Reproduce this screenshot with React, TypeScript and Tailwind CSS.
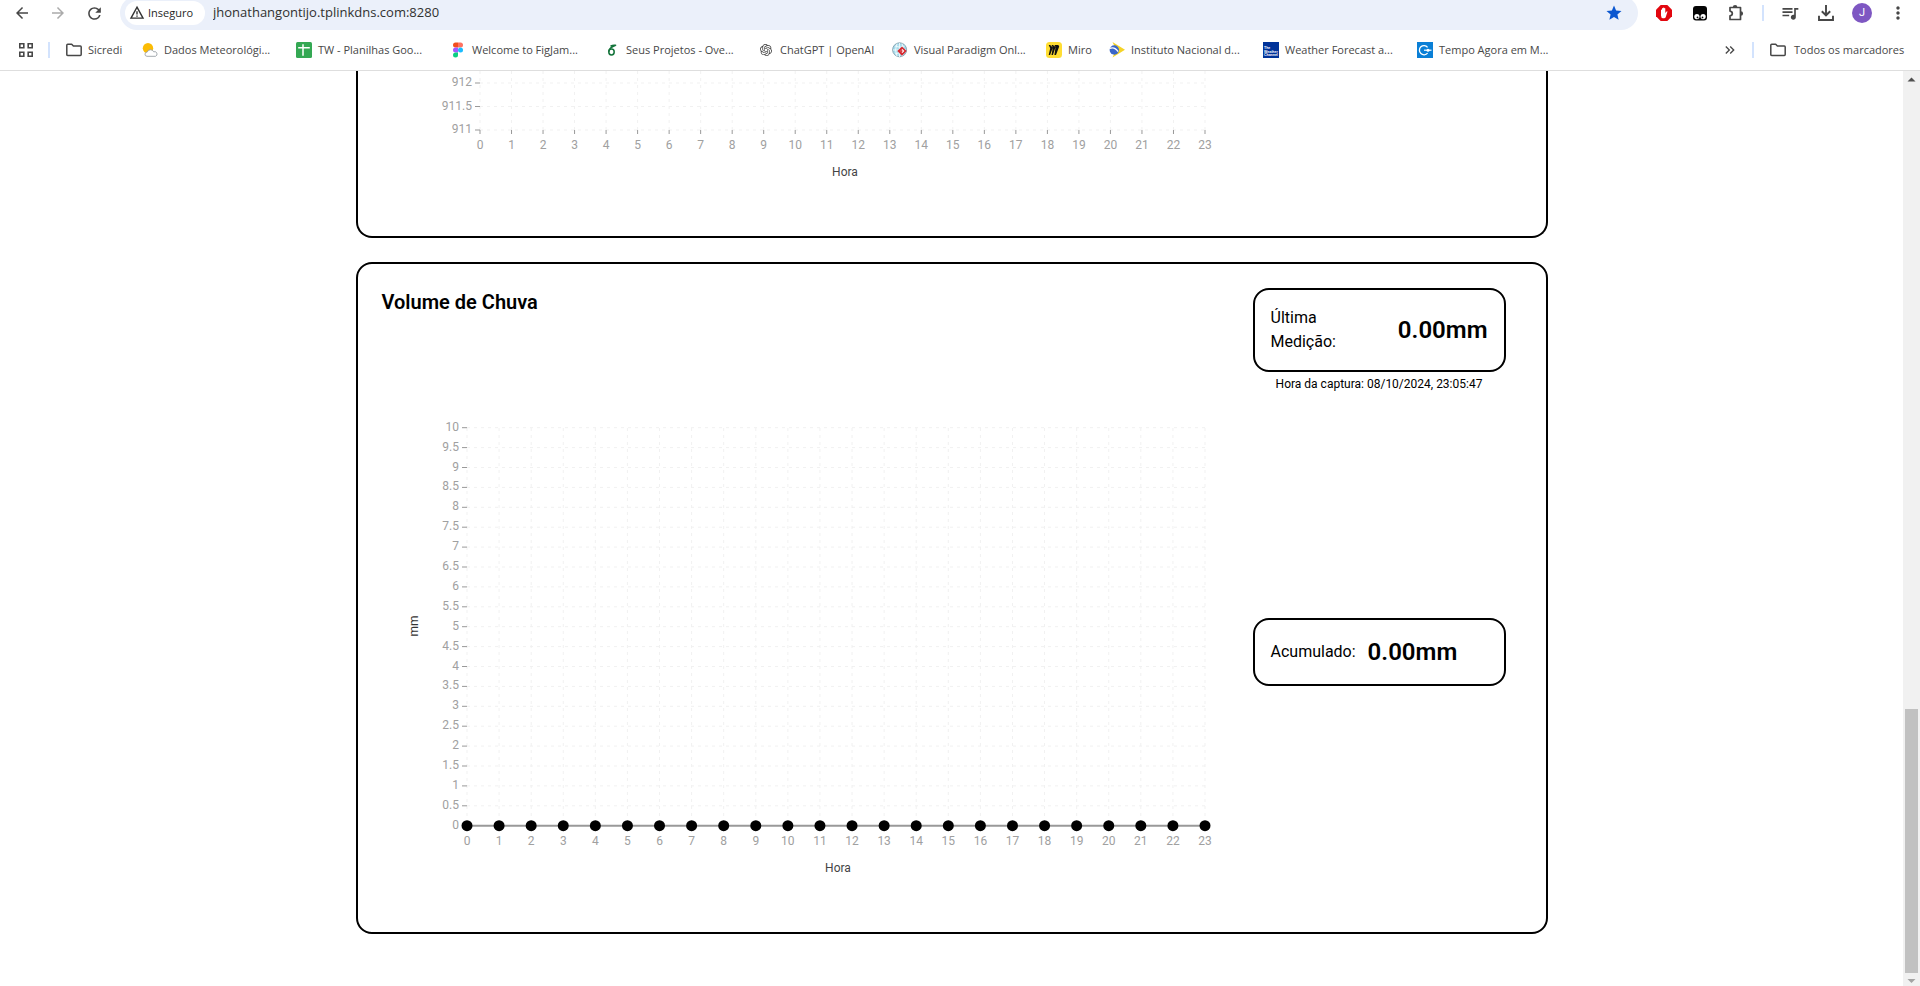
import React from "react";
import { MdArrowBack, MdArrowForward, MdRefresh, MdStar, MdMoreVert, MdQueueMusic, MdKeyboardDoubleArrowRight } from "react-icons/md";
import { SiOpenai } from "react-icons/si";

const hours = Array.from({ length: 24 }, (_, i) => i);

function FolderIcon() {
  return (
    <svg width="16" height="16" viewBox="0 0 16 16" fill="none" stroke="#474747" strokeWidth="1.5" strokeLinejoin="round">
      <path d="M.8 3.2q0-.9.9-.9h4l1.7 1.8h6.9q.9 0 .9.9v7.6q0 .9-.9.9H1.7q-.9 0-.9-.9z" />
    </svg>
  );
}

function AppsIcon() {
  return (
    <svg width="16" height="16" viewBox="0 0 16 16" fill="none" stroke="#474747" strokeWidth="1.6">
      <path d="M1.8 1.8h4v4h-4zM10.2 1.8h4v4h-4zM1.8 10.2h4v4h-4zM10.2 10.2h4v4h-4z" />
    </svg>
  );
}

function WarningIcon() {
  return (
    <svg width="16" height="16" viewBox="0 0 16 16" fill="none" stroke="#333" strokeWidth="1.4">
      <path d="M8 2.2 14 13.1H2z" strokeLinejoin="miter" />
      <path d="M8 6.2v3.4M8 10.4v1.3" />
    </svg>
  );
}

function HandIcon() {
  return (
    <svg width="16" height="16" viewBox="0 0 16 16">
      <path d="M4.7 0h6.6L16 4.7v6.6L11.3 16H4.7L0 11.3V4.7z" fill="#e2070f" />
      <path d="M5 8.2V5.1q0-.5.5-.5t.5.5V3.6q0-.6.5-.6t.6.6v-.5q0-.6.6-.6t.6.6v.6q0-.6.5-.6t.5.6v4.2l1-1.2q.5-.6 1.2-.2L9.7 12.3q-.5 1-1.7 1H7.300Q5 13.200 5 10.500z" fill="#fff" />
    </svg>
  );
}

function MonkeyIcon() {
  return (
    <svg width="16" height="16" viewBox="0 0 16 16">
      <rect x="1" y="1" width="14" height="14.500" rx="3" fill="#050505" />
      <circle cx="4.900" cy="11.600" r="2.600" fill="#fff" />
      <circle cx="11.100" cy="11.600" r="2.600" fill="#fff" />
      <circle cx="5.500" cy="12.400" r=".9" fill="#050505" />
      <circle cx="10.500" cy="12.400" r=".9" fill="#050505" />
    </svg>
  );
}

function PuzzleIcon() {
  return (
    <svg width="18" height="18" viewBox="0 0 18 18" fill="#474747">
      <path d="M3 3.500h10.500v12H3v-3.600q2.300-.4 2.300-2.400T3 7.100z" fill="none" stroke="#474747" strokeWidth="1.700" strokeLinejoin="round" />
      <path d="M5.800 3.200a2.300 2.300 0 0 1 4.600 0zM13.800 7.200a2.300 2.300 0 0 1 0 4.600z" />
    </svg>
  );
}

function DownloadIcon() {
  return (
    <svg width="18" height="18" viewBox="0 0 18 18" fill="none" stroke="#474747" strokeWidth="1.900">
      <path d="M9 1v10M4.800 7.200 9 11.300l4.200-4.100M2 11.800v4.200h14v-4.200" />
    </svg>
  );
}

function WeatherIcon() {
  return (
    <svg width="16" height="16" viewBox="0 0 16 16">
      <circle cx="6" cy="6.300" r="5.200" fill="#fbbc05" />
      <path d="M4 14.300a2.100 2.100 0 0 1 .2-4.200 3.500 3.500 0 0 1 6.500-.3 2.300 2.300 0 0 1 1.800 4.500z" transform="translate(1)" fill="#fff" stroke="#9aa0a6" strokeWidth=".9" />
    </svg>
  );
}

function SheetsIcon() {
  return (
    <svg width="16" height="16" viewBox="0 0 16 16">
      <rect width="16" height="16" rx="1.500" fill="#34a853" />
      <path d="M2.200 5.800h11.600M7 2.200v11.600" stroke="#fff" strokeWidth="1.500" />
    </svg>
  );
}

function FigmaIcon() {
  return (
    <svg width="16" height="16" viewBox="0 0 16 16">
      <path d="M8 .5H5.500a2.500 2.500 0 0 0 0 5H8z" fill="#f24e1e" />
      <path d="M8 .5h2.500a2.500 2.500 0 0 1 0 5H8z" fill="#ff7262" />
      <path d="M8 5.500H5.500a2.500 2.500 0 0 0 0 5H8z" fill="#a259ff" />
      <circle cx="10.500" cy="8" r="2.500" fill="#1abcfe" />
      <path d="M8 10.500H5.500A2.500 2.500 0 1 0 8 13z" fill="#0acf83" />
    </svg>
  );
}

function OverleafIcon() {
  return (
    <svg width="16" height="16" viewBox="0 0 16 16" fill="none" stroke="#13733a" strokeWidth="1.500" strokeLinecap="round">
      <ellipse cx="7.500" cy="10" rx="2.700" ry="2.900" />
      <path d="M4.900 9.200C5 6.800 7 5 11.600 3.300M7 3.900q1.600-.9 4.600-.6" />
    </svg>
  );
}

function ParadigmIcon() {
  return (
    <svg width="16" height="16" viewBox="0 0 16 16">
      <circle cx="7.600" cy="7.800" r="7" fill="#a9dcec" stroke="#7796a5" strokeWidth=".8" />
      <path d="M1 8h13M7.500 1v14M3 4q5 2.500 9.500 0M3 12q4-2.500 9 0M5 1.500q-3 6.500 0 13M10 1.500q3 6.500 0 13" stroke="#eef9fc" strokeWidth=".9" fill="none" />
      <path d="m10 4.400 4.700 4.700-4.700 4.700-4.700-4.700z" fill="#d7282f" />
      <path d="m10.400 7 2 2-2 2-2-2z" fill="#fff" />
      <path d="m9.600 7.900 1.200 1.200-1.200 1.200-1.200-1.200z" fill="#d7282f" />
    </svg>
  );
}

function MiroIcon() {
  return (
    <svg width="16" height="16" viewBox="0 0 16 16">
      <rect width="16" height="16" rx="3.500" fill="#ffdd33" />
      <path d="M9.800 3H8.400l1.200 2.100L6.900 3H5.500l1.300 2.600L4.100 3H2.700l1.500 3.300L2.700 13h1.400l2.700-7.300L5.500 13h1.400l2.700-7.900L8.400 13h1.600l3.200-8.600L12.300 3h-1.400z" fill="#111" />
    </svg>
  );
}

function InmetIcon() {
  return (
    <svg width="16" height="16" viewBox="0 0 16 16">
      <path d="M3.500 0 16 7.700 3.500 15.500 7 7.800z" fill="#f5d327" />
      <circle cx="5.300" cy="8" r="4.700" fill="#3a66c8" />
      <path d="M.6 6.500q5-2.300 8.500 3.200" stroke="#fff" strokeWidth="1.300" fill="none" />
    </svg>
  );
}

function WeatherChannelIcon() {
  return (
    <svg width="16" height="16" viewBox="0 0 16 16">
      <rect width="16" height="16" fill="#003399" />
      <g fill="#fff" fontFamily="Liberation Sans, sans-serif" fontSize="3.500" fontWeight="700">
        <text x="1" y="7">The</text>
        <text x="1" y="10.700">Weather</text>
        <text x="1" y="14.400">Channel</text>
      </g>
    </svg>
  );
}

function TempoIcon() {
  return (
    <svg width="16" height="16" viewBox="0 0 16 16">
      <rect width="16" height="16" fill="#0a7fd6" />
      <path d="M10.600 5.300a4.600 4.600 0 1 0 0 5.800" fill="none" stroke="#fff" strokeWidth="1.300" />
      <path d="M7 8.200h7.500" stroke="#fff" strokeWidth="1.200" />
      <circle cx="11" cy="8.200" r="1.500" fill="#fff" />
    </svg>
  );
}

const bookmarks: { label: string; icon: React.ReactNode; width: string }[] = [
  { label: "Sicredi", icon: <FolderIcon />, width: "w-[76px]" },
  { label: "Dados Meteorológi...", icon: <WeatherIcon />, width: "w-[154px]" },
  { label: "TW - Planilhas Goo...", icon: <SheetsIcon />, width: "w-[154px]" },
  { label: "Welcome to FigJam...", icon: <FigmaIcon />, width: "w-[154px]" },
  { label: "Seus Projetos - Ove...", icon: <OverleafIcon />, width: "w-[154px]" },
  { label: "ChatGPT | OpenAI", icon: <SiOpenai size={12} color="#444" />, width: "w-[134px]" },
  { label: "Visual Paradigm Onl...", icon: <ParadigmIcon />, width: "w-[154px]" },
  { label: "Miro", icon: <MiroIcon />, width: "w-[63px]" },
  { label: "Instituto Nacional d...", icon: <InmetIcon />, width: "w-[154px]" },
  { label: "Weather Forecast a...", icon: <WeatherChannelIcon />, width: "w-[154px]" },
  { label: "Tempo Agora em M...", icon: <TempoIcon />, width: "w-[154px]" },
];

function ToolButton({ label, children }: { label: string; children: React.ReactNode }) {
  return (
    <button aria-label={label} className="flex h-[26px] w-9 shrink-0 items-center justify-center text-[#474747]">
      {children}
    </button>
  );
}

function BrowserBar() {
  return (
    <header className="border-b border-[#dedede] bg-white font-['Open_Sans',sans-serif]">
      <div className="flex h-[30px] items-start px-1">
        <ToolButton label="Voltar"><MdArrowBack size={18} /></ToolButton>
        <ToolButton label="Avançar"><MdArrowForward size={18} className="text-[#ababab]" /></ToolButton>
        <ToolButton label="Recarregar"><MdRefresh size={19} /></ToolButton>
        <div className="-mt-1 ml-2 mr-2 flex h-[34px] flex-1 items-center rounded-full bg-[#ebf0fa] pl-[5px] pr-[15px]">
          <button className="flex h-6 w-20 shrink-0 items-center gap-[3px] rounded-full bg-white pl-1 text-[11px] font-medium text-[#1f1f1f]">
            <WarningIcon />
            Inseguro
          </button>
          <input
            aria-label="Endereço"
            defaultValue="jhonathangontijo.tplinkdns.com:8280"
            className="ml-2 flex-1 bg-transparent text-[13px] text-[#303030] outline-none"
          />
          <button aria-label="Editar favorito" className="text-[#0b57d0]"><MdStar size={18} /></button>
        </div>
        <ToolButton label="Bloqueador"><HandIcon /></ToolButton>
        <ToolButton label="Scripts"><MonkeyIcon /></ToolButton>
        <ToolButton label="Extensões"><PuzzleIcon /></ToolButton>
        <div className="mx-2 mt-[5px] h-4 w-0.5 shrink-0 bg-[#d3e3fd]" />
        <ToolButton label="Mídia"><MdQueueMusic size={20} /></ToolButton>
        <ToolButton label="Downloads"><DownloadIcon /></ToolButton>
        <ToolButton label="Perfil">
          <span className="flex size-5 items-center justify-center rounded-full bg-[#7e57c2] font-[Roboto,sans-serif] text-[11px] text-white">J</span>
        </ToolButton>
        <ToolButton label="Menu"><MdMoreVert size={20} /></ToolButton>
      </div>
      <nav className="flex h-10 items-center pl-[18px] pr-[14px] text-[11px] text-[#474747]">
        <button aria-label="Aplicativos"><AppsIcon /></button>
        <div className="ml-[14px] mr-4 h-4 w-0.5 bg-[#d3e3fd]" />
        {bookmarks.map((b) => (
          <a key={b.label} href="#" className={`flex shrink-0 items-center gap-1.5 whitespace-nowrap ${b.width}`}>
            <span className="flex size-4 shrink-0 items-center justify-center">{b.icon}</span>
            {b.label}
          </a>
        ))}
        <button aria-label="Mais favoritos" className="ml-auto"><MdKeyboardDoubleArrowRight size={16} /></button>
        <div className="ml-[14px] mr-4 h-4 w-0.5 bg-[#d3e3fd]" />
        <a href="#" className="flex w-[136px] items-center gap-2 whitespace-nowrap">
          <FolderIcon />
          Todos os marcadores
        </a>
      </nav>
    </header>
  );
}

interface ChartProps {
  height: number;
  left: number;
  top: number;
  bottom: number;
  rows: { value: string; y: number }[];
  labelX: number;
  xLabelY: number;
  xTicks?: boolean;
  unit?: string;
  points?: boolean;
}

const RIGHT = 823;

function HourChart({ height, left, top, bottom, rows, labelX, xLabelY, xTicks, unit, points }: ChartProps) {
  const step = (RIGHT - left) / 23;
  return (
    <svg width="840" height={height} viewBox={`0 0 840 ${height}`} fontFamily="Roboto, sans-serif" fontSize="12" className="block">
      <g stroke="#f1f1f1" strokeDasharray="3 4">
        {rows.map((r) => (
          <line key={r.value} x1={left} x2={RIGHT} y1={r.y} y2={r.y} />
        ))}
        {hours.map((h) => (
          <line key={h} x1={left + h * step} x2={left + h * step} y1={top} y2={bottom} />
        ))}
      </g>
      <g stroke="#999">
        {rows.map((r) => (
          <line key={r.value} x1={left - 5} x2={left} y1={r.y} y2={r.y} />
        ))}
        {xTicks && hours.map((h) => <line key={h} x1={left + h * step} x2={left + h * step} y1={bottom} y2={bottom + 4} />)}
      </g>
      <g fill="#a0a0a0">
        {rows.map((r) => (
          <text key={r.value} x={left - 8} y={r.y + 3} textAnchor="end">{r.value}</text>
        ))}
        {hours.map((h) => (
          <text key={h} x={left + h * step} y={xLabelY} textAnchor="middle">{h}</text>
        ))}
      </g>
      <text x={labelX} y={xLabelY + 27} textAnchor="middle" fill="#444">Hora</text>
      {unit && <text transform="translate(36 310) rotate(-90)" textAnchor="middle" fill="#333">{unit}</text>}
      {points && (
        <g>
          <line x1={left} x2={RIGHT} y1={bottom} y2={bottom} stroke="#999" strokeWidth="2" />
          {hours.map((h) => (
            <circle key={h} cx={left + h * step} cy={bottom} r="5.500" />
          ))}
        </g>
      )}
    </svg>
  );
}

const pressureRows = [
  { value: "912", y: 12 },
  { value: "911.5", y: 35.5 },
  { value: "911", y: 59 },
];

const rainRows = Array.from({ length: 21 }, (_, i) => ({ value: String(10 - i / 2), y: 111.7 + i * 19.9 }));

function Scrollbar() {
  return (
    <div aria-hidden="true" className="flex w-[17px] shrink-0 flex-col items-center bg-[#f1f1f1]">
      <svg width="17" height="17" viewBox="0 0 17 17"><path d="m8.500 6.500 4 4h-8z" fill="#505050" /></svg>
      <div className="flex-1" />
      <div className="h-[264px] w-[13px] bg-[#c1c1c1]" />
      <svg width="17" height="13" viewBox="0 0 17 13"><path d="m8.500 10 4-4h-8z" fill="#a3a3a3" /></svg>
    </div>
  );
}

export default function App() {
  return (
    <div className="flex min-h-screen flex-col bg-white">
      <BrowserBar />
      <div className="flex flex-1">
        <main className="flex-1 font-[Roboto,sans-serif] text-black">
          <div className="mx-auto flex max-w-[1192px] flex-col gap-6 pb-12">
            <section className="rounded-b-2xl border-x-2 border-b-2 border-black px-6 pb-6">
              <HourChart height={141} left={98} top={0} bottom={59} rows={pressureRows} labelX={463} xLabelY={78} xTicks />
            </section>
            <section className="flex justify-between rounded-2xl border-2 border-black py-6 pl-6 pr-10">
              <div>
                <h2 className="text-xl font-semibold">Volume de Chuva</h2>
                <HourChart height={592} left={85} top={112} bottom={509.7} rows={rainRows} labelX={456} xLabelY={529} unit="mm" points />
              </div>
              <div className="w-[253px]">
                <div className="flex items-center justify-between rounded-2xl border-2 border-black p-4">
                  <p className="w-24">Última Medição:</p>
                  <p className="text-2xl font-semibold">0.00mm</p>
                </div>
                <p className="text-center text-xs/6">Hora da captura: 08/10/2024, 23:05:47</p>
                <div className="mt-[222px] flex items-center gap-3 rounded-2xl border-2 border-black p-4">
                  <p>Acumulado:</p>
                  <p className="text-2xl font-semibold">0.00mm</p>
                </div>
              </div>
            </section>
          </div>
        </main>
        <Scrollbar />
      </div>
    </div>
  );
}
